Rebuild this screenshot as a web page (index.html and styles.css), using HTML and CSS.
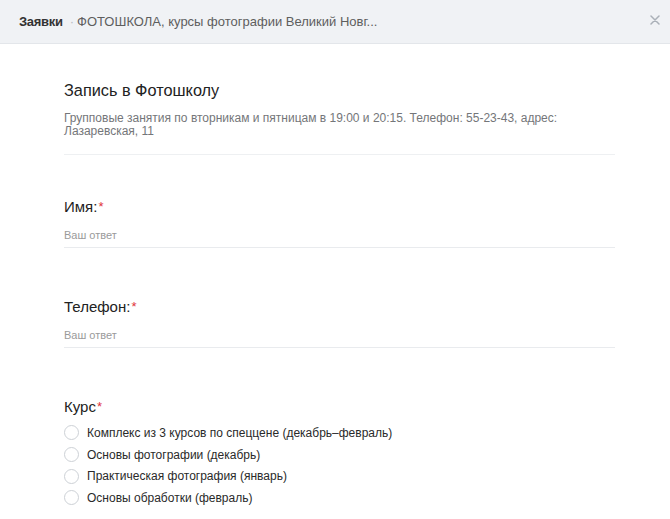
FILE: index.html
```html
<!DOCTYPE html>
<html lang="ru">
<head>
<meta charset="utf-8">
<link rel="stylesheet" href="styles.css">
</head>
<body>
<header class="topbar">
  <span class="crumb-main">Заявки</span>
  <span class="crumb-sep">·</span>
  <span class="crumb-sub">ФОТОШКОЛА, курсы фотографии Великий Новг...</span>
  <span class="close">
    <svg width="10" height="10" viewBox="0 0 10 10"><path d="M1 1 L9 9 M9 1 L1 9" stroke="#aab0b8" stroke-width="1.5" stroke-linecap="round" fill="none"/></svg>
  </span>
</header>
<main class="form">
  <section class="intro">
    <h1 class="title">Запись в Фотошколу</h1>
    <p class="desc">Групповые занятия по вторникам и пятницам в 19:00 и 20:15. Телефон: 55-23-43, адрес: Лазаревская, 11</p>
  </section>
  <section class="field first">
    <div class="label">Имя:<span class="req">*</span></div>
    <div class="answer">Ваш ответ</div>
  </section>
  <section class="field">
    <div class="label">Телефон:<span class="req">*</span></div>
    <div class="answer">Ваш ответ</div>
  </section>
  <section class="field radios">
    <div class="label">Курс<span class="req">*</span></div>
    <ul class="options">
      <li class="option"><span class="radio"></span>Комплекс из 3 курсов по спеццене (декабрь–февраль)</li>
      <li class="option"><span class="radio"></span>Основы фотографии (декабрь)</li>
      <li class="option"><span class="radio"></span>Практическая фотография (январь)</li>
      <li class="option"><span class="radio"></span>Основы обработки (февраль)</li>
    </ul>
  </section>
</main>
</body>
</html>
```
FILE: styles.css
```css
html, body {
  margin: 0;
  padding: 0;
  background: #ffffff;
  font-family: "Liberation Sans", Arial, sans-serif;
  color: #222222;
}
.topbar {
  height: 43px;
  background: #f0f2f5;
  border-bottom: 1px solid #e3e6ea;
  display: flex;
  align-items: center;
  padding: 0 0 0 19px;
  font-size: 13px;
  line-height: 16px;
}
.crumb-main {
  font-weight: bold;
  color: #333333;
  letter-spacing: -0.3px;
}
.crumb-sep {
  color: #b8bcc2;
  margin: 0 3px 0 7px;
}
.crumb-sub {
  color: #5e5e5e;
}
.close {
  margin-left: auto;
  margin-right: 10px;
  width: 10px;
  height: 10px;
  display: flex;
  margin-top: -3px;
}
.form {
  padding: 36px 55px 0 64px;
}
.intro {
  border-bottom: 1px solid #eef0f2;
  padding-bottom: 16px;
}
.title {
  margin: 0;
  font-size: 16.3px;
  line-height: 20px;
  font-weight: normal;
  color: #222;
}
.desc {
  margin: 12px 0 0 0;
  font-size: 12px;
  line-height: 13px;
  color: #747679;
}
.field {
  padding-top: 50px;
}
.field.first {
  padding-top: 43px;
}
.label {
  font-size: 15px;
  line-height: 18px;
  color: #222;
}
.req {
  color: #e0333b;
  font-size: 13px;
  vertical-align: top;
  margin-left: 1px;
}
.answer {
  margin-top: 12px;
  font-size: 11px;
  line-height: 14px;
  color: #9a9a9a;
  padding-bottom: 5px;
  border-bottom: 1px solid #e9ebee;
}
.options {
  list-style: none;
  margin: 6px 0 0 0;
  padding: 0;
}
.option {
  display: flex;
  align-items: center;
  height: 21.7px;
  font-size: 12px;
  color: #2a2a2a;
}
.radio {
  width: 13px;
  height: 13px;
  border: 1px solid #cdd1d6;
  border-radius: 50%;
  margin-right: 8px;
  flex-shrink: 0;
}
```
